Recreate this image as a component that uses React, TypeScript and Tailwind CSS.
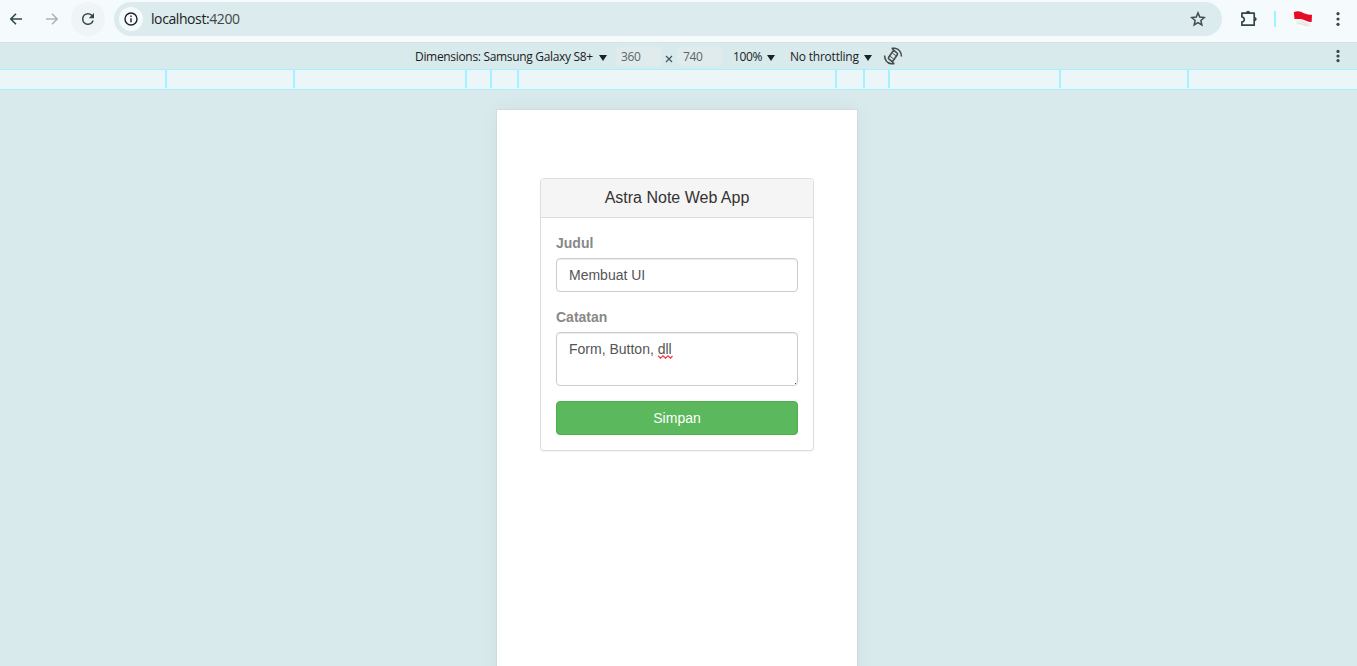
import React from "react";

const UI_FONT = "font-['Open_Sans','Noto_Sans',sans-serif]";

// Each ruler segment ends with a tick mark on its right edge.
const rulerSegments = [
  "w-[167px]", "w-[128px]", "w-[172px]", "w-[25px]", "w-[27px]",
  "w-[318px]", "w-[28px]", "w-[25px]", "w-[171px]", "w-[128px]",
];

function Caret({ className = "" }: { className?: string }) {
  return (
    <svg className={`shrink-0 ${className}`} width="8" height="6" viewBox="0 0 8 6" fill="#1a2223">
      <path d="M0 0h8L4 6z" />
    </svg>
  );
}

function Dots({ tight = false }: { tight?: boolean }) {
  const gap = tight ? 4.6 : 5.3;
  return (
    <svg className="shrink-0" width="6" height="18" viewBox="0 0 6 18" fill="#33474a">
      <circle cx="3" cy={9 - gap} r="1.6" />
      <circle cx="3" cy="9" r="1.6" />
      <circle cx="3" cy={9 + gap} r="1.6" />
    </svg>
  );
}

function BrowserBar() {
  return (
    <header className="flex h-[42px] shrink-0 items-start bg-[#f5fbfd] pt-[2px]">
      <div className="flex h-[34px] w-[71px] items-center pl-[9px]">
        <svg width="14" height="12" viewBox="0 0 14 12" fill="none" stroke="#33474a" strokeWidth="1.6">
          <path d="M13 6H2M7 .8 1.8 6 7 11.2" />
        </svg>
        <svg className="ml-[22px]" width="14" height="12" viewBox="0 0 14 12" fill="none" stroke="#adb5b7" strokeWidth="1.6">
          <path d="M1 6h11M7 .8 12.2 6 7 11.2" />
        </svg>
      </div>
      <div className="flex size-[34px] items-center justify-center rounded-full bg-[#eff5f7]">
        <svg width="18" height="18" viewBox="0 0 24 24" fill="#33474a">
          <path d="M17.65 6.35A7.95 7.95 0 0 0 12 4a8 8 0 1 0 7.73 10h-2.08A6 6 0 1 1 12 6c1.66 0 3.14.69 4.22 1.78L13 11h7V4z" />
        </svg>
      </div>
      <div className="ml-[9px] flex h-[34px] w-[1108px] items-center rounded-full bg-[#dbebee] pl-[5px] pr-[16px]">
        <div className="flex size-6 items-center justify-center rounded-full bg-[#f5fbfd]">
          <svg width="14" height="14" viewBox="0 0 14 14" fill="none" stroke="#1a2223" strokeWidth="1.4">
            <circle cx="7" cy="7" r="6" />
            <path d="M7 6.2v4M7 3.6v1.5" />
          </svg>
        </div>
        <span className={`ml-2 flex-1 text-[14px] leading-5 tracking-[-0.41px] text-[#1a2223] ${UI_FONT}`}>
          localhost:<span className="text-[#454746]">4200</span>
        </span>
        <svg width="16" height="16" viewBox="0 0 16 16" fill="none" stroke="#454b4d" strokeWidth="1.5">
          <path d="m8 1.9 1.75 4.2 4.5.4-3.4 3 1 4.4L8 11.6l-3.85 2.3 1-4.4-3.4-3 4.5-.4z" />
        </svg>
      </div>
      <div className="flex h-[34px] flex-1 items-center pl-[18px]">
        <svg width="18" height="18" viewBox="0 0 18 18" fill="none" stroke="#33474a" strokeWidth="1.7" strokeLinejoin="round">
          <path d="M1.9 3.1h12.3v12.1H1.9v-3.3c3.2-.2 3.2-4.7 0-4.9z" />
          <path d="M6 3C6-.1 10.2-.1 10.2 3zM14.4 7c3 0 3 4.2 0 4.2z" fill="#33474a" stroke="none" />
        </svg>
        <div className="ml-[16px] h-4 w-[2px] bg-[#a2f2ff]" />
        <svg className="ml-[17px]" width="20" height="20" viewBox="0 0 20 20">
          <circle cx="10" cy="10" r="9.5" fill="#fdfdfd" />
          <path d="M.8 3.2C5 1.2 8 2.8 11 4.2c3.200 1.400 5 1.300 8 1.600L18.700 13c-4 .2-6-1.600-9-2.500-3-.9-5-.5-8.200-.5z" fill="#e40d25" />
          <path d="M2.500 11c2.200-.6 4.200-.6 7.200.3 3 1 5 2.700 8.800 2.500L16.500 17.500c-4 1.500-6-2-13.500-1.700z" fill="#f1f1f2" />
          <path d="m8 12 7 4M5 14.500c4-.4 6 1.400 9 2.300" stroke="#dcdddf" strokeWidth=".8" fill="none" />
        </svg>
        <div className="ml-[22px] flex"><Dots /></div>
      </div>
    </header>
  );
}

function DeviceToolbar() {
  return (
    <div className={`flex h-[27px] shrink-0 items-center border-t border-[#d5e2e5] bg-[#d9eaec] pl-[415px] text-[12px] leading-4 text-[#1a2223] ${UI_FONT}`}>
      <div className="flex w-[201px] items-center pt-[2px]">
        <span className="w-[184px] whitespace-nowrap tracking-[-0.32px]">Dimensions: Samsung Galaxy S8+</span>
        <Caret className="mt-px" />
      </div>
      <div className="flex h-[19px] w-[45px] items-center rounded-[3px] bg-[#dfebed] pl-[5px] pt-[2px] tracking-[-0.35px] text-[#5c6668]">360</div>
      <svg className="ml-[4px] mt-[5px]" width="8" height="8" viewBox="0 0 8 8" stroke="#45565a" strokeWidth="1.2">
        <path d="m1 1 6 6M7 1 1 7" />
      </svg>
      <div className="ml-[4px] flex h-[19px] w-[45px] items-center rounded-[3px] bg-[#dfebed] pl-[6px] pt-[2px] tracking-[-0.35px] text-[#5c6668]">740</div>
      <div className="flex items-center pt-[2px]">
        <span className="ml-[11px] w-[34px] tracking-[-0.4px]">100%</span>
        <Caret className="mt-px" />
        <span className="ml-[15px] w-[74px] whitespace-nowrap tracking-[-0.22px]">No throttling</span>
        <Caret className="mt-px" />
      </div>
      <svg className="ml-[11px]" width="20" height="20" viewBox="0 0 20 20" fill="none" stroke="#454b4d" strokeWidth="1.6">
        <rect x="7.2" y="5.1" width="5.6" height="9.8" rx="1.4" transform="rotate(35 10 10)" />
        <path d="m9.600 7.300 3.300 2.300M7.100 10.400l3.300 2.300" strokeWidth="1" />
        <path d="M1.600 9.600c0 4 2.600 7.500 6.500 8.200h3.200M8.400 15l2.800 2.800M18.400 10.400c0-4-2.600-7.500-6.500-8.200H8.700M11.600 5 8.800 2.200" />
      </svg>
      <div className="ml-auto mr-[16px] flex"><Dots tight /></div>
    </div>
  );
}

function Ruler() {
  return (
    <div className="flex h-[21px] shrink-0 border-y border-[#a2f2ff] bg-[#ecf5f8]">
      {rulerSegments.map((width, i) => (
        <div key={i} className={`h-[18px] shrink-0 border-r-2 border-[#a2f2ff] ${width}`} />
      ))}
    </div>
  );
}

function NoteForm() {
  const field =
    "block w-full rounded border border-[#ccc] bg-white px-3 py-[6px] text-[14px] leading-5 text-[#555] shadow-[inset_0_1px_1px_rgba(0,0,0,0.075)] outline-none";
  return (
    <section className="h-fit w-[274px] rounded border border-[#ddd] bg-white font-['Liberation_Sans',Arial,sans-serif] shadow-[0_1px_1px_rgba(0,0,0,0.05)]">
      <h3 className="h-[39px] rounded-t-[3px] border-b border-[#ddd] bg-[#f5f5f5] pt-[10px] text-center text-[16px] leading-[18px] text-[#333]">
        Astra Note Web App
      </h3>
      <form className="p-[15px] text-[14px] leading-5" onSubmit={(e) => e.preventDefault()}>
        <label className="mb-[5px] block font-bold text-[#888]">Judul</label>
        <div className={`h-[34px] ${field}`}>Membuat UI</div>
        <label className="mb-[5px] mt-[15px] block font-bold text-[#888]">Catatan</label>
        <div className={`relative h-[54px] ${field}`}>
          Form, Button,{" "}
          <span className="relative">
            dll
            <svg className="absolute left-0 top-[14px]" width="15" height="4" viewBox="0 0 15 4" fill="none" stroke="#f33" strokeWidth="1.2">
              <path d="M0 .6 2.5 3.200 5 .8l2.500 2.400L10 .8l2.500 2.400L14.500 1" />
            </svg>
          </span>
          <span className="absolute bottom-[1px] right-[1px] size-px bg-[#444]" />
        </div>
        <button className="mt-[15px] block h-[34px] w-full rounded border border-[#4cae4c] bg-[#5cb85c] text-center text-white">
          Simpan
        </button>
      </form>
    </section>
  );
}

export default function App() {
  return (
    <div className="flex h-[666px] w-[1357px] flex-col overflow-hidden bg-[#d9eaec]">
      <BrowserBar />
      <DeviceToolbar />
      <Ruler />
      <main className="flex flex-1 overflow-hidden pl-[497px] pt-[20px]">
        <div className="flex h-[740px] w-[360px] shrink-0 justify-center bg-white pt-[68px] shadow-[0_0_0_1px_rgba(0,0,0,0.03),0_0_20px_rgba(0,0,0,0.05)]">
          <NoteForm />
        </div>
      </main>
    </div>
  );
}
